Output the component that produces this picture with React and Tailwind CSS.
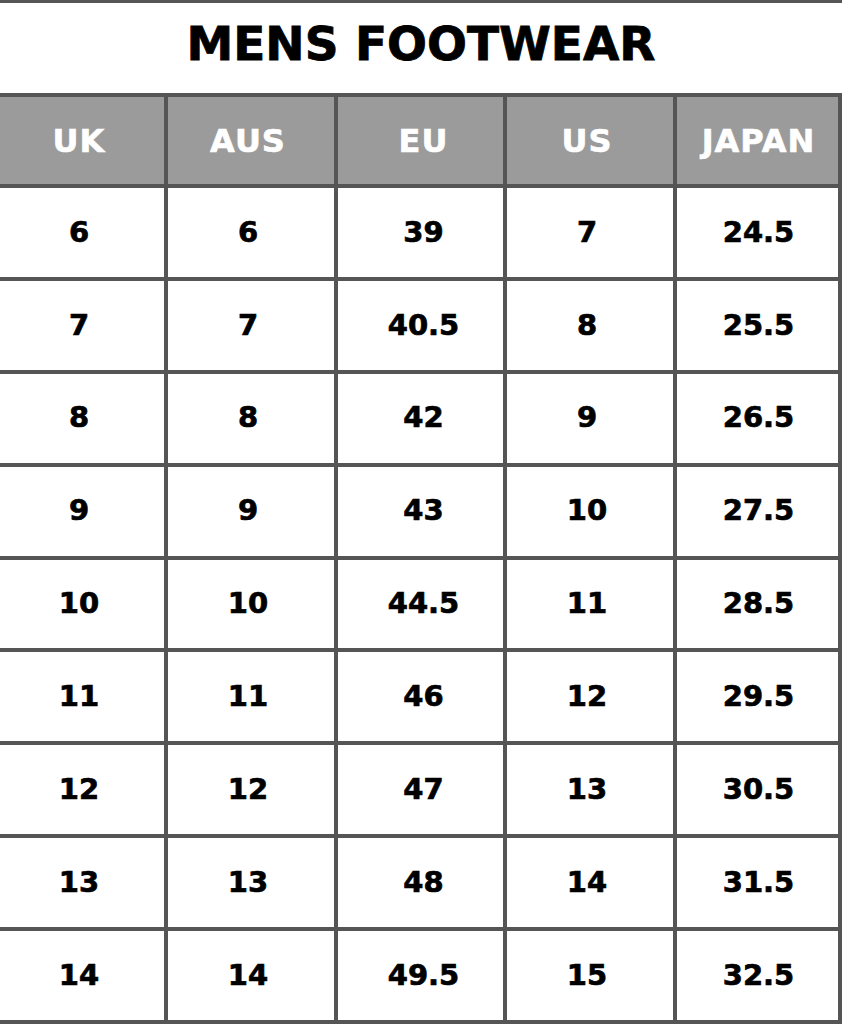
// App.jsx — mens footwear size chart
const HEADERS = ["UK", "AUS", "EU", "US", "JAPAN"];

// small nudges so each column's text sits where the chart has it
const COL_PAD = ["pr-[6px]", "pr-[6px]", "pl-[6px]", "pr-[6px]", "pl-[2px]"];

const ROWS = [
  ["6", "6", "39", "7", "24.5"],
  ["7", "7", "40.5", "8", "25.5"],
  ["8", "8", "42", "9", "26.5"],
  ["9", "9", "43", "10", "27.5"],
  ["10", "10", "44.5", "11", "28.5"],
  ["11", "11", "46", "12", "29.5"],
  ["12", "12", "47", "13", "30.5"],
  ["13", "13", "48", "14", "31.5"],
  ["14", "14", "49.5", "15", "32.5"],
];

export default function App() {
  return (
    <div
      className="w-[842px] h-[1024px] bg-white border-t-[3px] border-[#555555] flex flex-col overflow-hidden"
      style={{ fontFamily: '"DejaVu Sans", "Liberation Sans", sans-serif' }}
    >
      {/* Title */}
      <div className="h-[90px] flex items-center justify-center pb-[9px]">
        <h1 className="text-[47px] font-bold leading-none text-black [-webkit-text-stroke:0.8px_black]">
          MENS FOOTWEAR
        </h1>
      </div>

      {/* Table */}
      <div className="flex-1 grid grid-cols-[164px_166px_165px_166px_161px] grid-rows-[87px_repeat(9,1fr)] gap-[4px] bg-[#555555] pt-[4px] pr-[4px] pb-[4px]">
        {HEADERS.map((h, j) => (
          <div
            key={h}
            className={`bg-[#9b9b9b] flex items-center justify-center text-white text-[32px] font-bold tracking-[1px] [-webkit-text-stroke:0.6px_white] ${COL_PAD[j]}`}
          >
            {h}
          </div>
        ))}
        {ROWS.map((row, i) =>
          row.map((val, j) => (
            <div
              key={`${i}-${j}`}
              className={`bg-white flex items-center justify-center text-black text-[29px] font-bold [-webkit-text-stroke:0.7px_black] ${COL_PAD[j]}`}
            >
              {val}
            </div>
          ))
        )}
      </div>
    </div>
  );
}
